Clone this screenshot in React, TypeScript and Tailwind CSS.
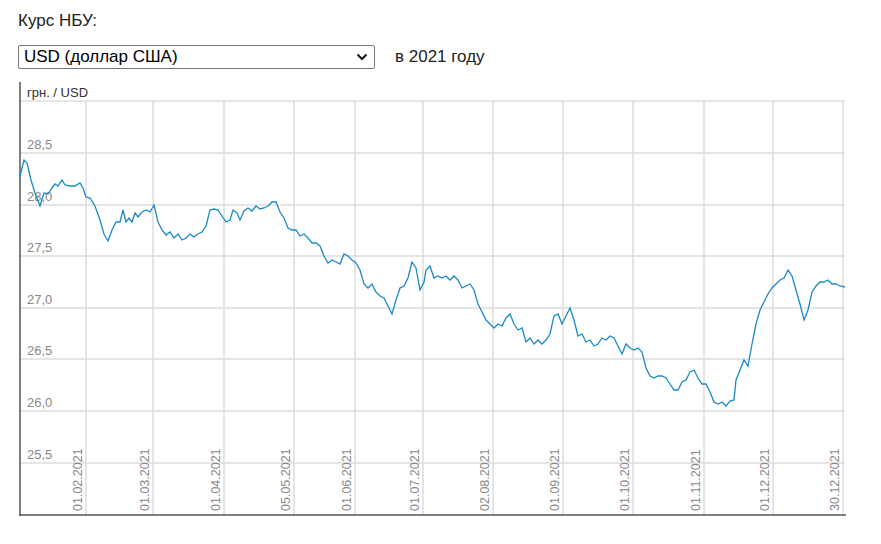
const pts: [number, number][] = [
  [20,178],[24,162],[27,165],[31,182],[35,195],[40,208],[44,195],[48,196],[52,190],[55,186],[58,188],[62,182],[65,187],[70,188],[75,188],[80,185],[83,190],[86,199],[90,200],[95,208],[100,222],[104,236],[108,243],[112,232],[116,224],[120,224],[123,212],[126,224],[129,220],[132,224],[135,215],[138,219],[142,214],[146,212],[150,214],[154,207],[158,224],[162,232],[166,237],[170,234],[174,240],[178,236],[182,242],[186,240],[190,236],[194,239],[198,236],[202,234],[206,228],[210,212],[214,211],[218,212],[222,218],[226,224],[230,222],[233,212],[237,215],[240,222],[244,213],[248,210],[252,213],[256,208],[260,211],[264,210],[268,208],[272,204],[276,204],[280,214],[284,220],[288,230],[292,232],[296,232],[300,238],[304,236],[308,240],[312,245],[316,245],[320,248],[324,258],[328,265],[332,262],[336,264],[340,266],[344,256],[348,258],[352,262],[356,265],[360,272],[364,286],[368,290],[372,286],[376,294],[380,298],[384,300],[388,308],[392,316],[396,302],[400,290],[404,288],[408,280],[412,264],[416,270],[420,292],[424,284],[426,272],[430,268],[434,280],[438,278],[442,280],[446,278],[450,282],[454,278],[458,282],[462,290],[466,288],[470,286],[474,292],[478,306],[482,314],[486,322],[490,326],[494,330],[498,326],[502,328],[506,320],[510,316],[514,326],[518,332],[522,330],[526,344],[530,340],[534,346],[538,342],[542,346],[546,342],[550,336],[554,318],[558,316],[562,326],[566,318],[570,310],[574,322],[578,338],[582,336],[586,344],[590,342],[594,348],[598,346],[602,340],[606,342],[610,338],[614,340],[618,348],[622,356],[626,346],[630,350],[634,352],[638,350],[642,354],[646,370],[650,378],[654,380],[658,378],[662,378],[666,380],[670,386],[674,392],[678,392],[682,384],[686,382],[690,374],[694,372],[698,380],[702,386],[706,386],[710,394],[714,404],[718,406],[722,404],[726,408],[730,403],[734,402],[736,382],[740,372],[744,362],[748,368],[752,346],[756,326],[760,312],[764,304],[768,296],[772,290],[776,286],[780,282],[784,280],[788,272],[792,278],[796,292],[800,306],[804,322],[808,312],[812,294],[816,288],[820,284],[824,284],[828,282],[832,286],[836,286],[840,288],[845,289],
]

const hLines = [103, 155, 207, 258, 310, 361, 413, 465]
const yLabels: [number, string][] = [[155, "28,5"], [207, "28,0"], [258, "27,5"], [310, "27,0"], [361, "26,5"], [413, "26,0"], [465, "25,5"]]
const vLines: [number, string][] = [
  [86, "01.02.2021"], [153, "01.03.2021"], [224, "01.04.2021"], [294, "05.05.2021"], [355, "01.06.2021"], [423, "01.07.2021"],
  [493, "02.08.2021"], [563, "01.09.2021"], [633, "01.10.2021"], [704, "01.11.2021"], [773, "01.12.2021"], [843, "30.12.2021"],
]

export default function App() {
  return (
    <div className="w-[881px] h-[544px] bg-white overflow-hidden" style={{ fontFamily: "'Liberation Sans', Arial, sans-serif" }}>
      <div className="pl-[18px] pt-[9px] text-[17px] text-[#222] font-['DejaVu_Sans',sans-serif] leading-[24px]">Курс НБУ:</div>
      <div className="flex items-center pl-[18px] mt-[11px] gap-[20px]">
        <div className="w-[357px] h-[24px] border border-[#767676] rounded-[2px] flex items-center justify-between pl-[5px] pr-[6px] text-[17px] text-black">
          <span>USD (доллар США)</span>
          <svg width="12" height="8" viewBox="0 0 12 8"><path d="M1.5 1.5 L6 6 L10.5 1.5" fill="none" stroke="#111" strokeWidth="2" /></svg>
        </div>
        <span className="text-[17px] text-[#222] font-['DejaVu_Sans',sans-serif]">в 2021 году</span>
      </div>
      <svg width="881" height="464" className="mt-[8px] block">
        <g transform="translate(0,-80)">
          {hLines.map((y) => <line key={y} x1={20} x2={845} y1={y} y2={y} stroke="#dcdcdc" strokeWidth="1.5" />)}
          {vLines.map(([x]) => <line key={x} x1={x} x2={x} y1={103} y2={517} stroke="#dcdcdc" strokeWidth="1.5" />)}
          <line x1={20} x2={20} y1={84} y2={518} stroke="#555" strokeWidth="1.5" />
          <line x1={19} x2={846} y1={517} y2={517} stroke="#555" strokeWidth="1.5" />
          <text x={27} y={99} fontSize="13" fill="#333">грн. / USD</text>
          {yLabels.map(([y, t]) => <text key={t} x={27} y={y - 4} fontSize="13" fill="#888">{t}</text>)}
          {vLines.map(([x, t]) => (
            <text key={t} transform={`translate(${x - 4},513) rotate(-90)`} fontSize="12.5" fill="#888">{t}</text>
          ))}
          <polyline points={pts.map((p) => p.join(",")).join(" ")} fill="none" stroke="#1a8ac6" strokeWidth="1.3" />
        </g>
      </svg>
    </div>
  )
}
